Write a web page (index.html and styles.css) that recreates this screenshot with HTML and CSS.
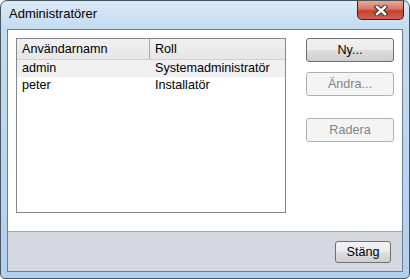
FILE: index.html
```html
<!DOCTYPE html>
<html lang="sv">
<head>
    <meta charset="UTF-8">
    <meta name="viewport" content="width=device-width, initial-scale=1.0">
    <title>Administratörer</title>
    <link rel="stylesheet" href="styles.css">
</head>
<body>

    <div class="window">
        <div class="titlebar">
            <span class="title">Administratörer</span>
            <button class="close" type="button" aria-label="Stäng">
                <svg width="14" height="11" viewBox="0 0 14 11">
                    <path d="M3 2 L11 9 M11 2 L3 9" stroke="#3a3a3a" stroke-width="4.6" stroke-linecap="square"/>
                    <path d="M3 2 L11 9 M11 2 L3 9" stroke="#ffffff" stroke-width="2.4" stroke-linecap="square"/>
                </svg>
            </button>
        </div>

        <div class="client">
            <div class="content">
                <div class="list">
                    <div class="list-head">
                        <span class="col-name">Användarnamn</span>
                        <span class="col-role">Roll</span>
                    </div>
                    <div class="row row-alt">
                        <span class="col-name">admin</span>
                        <span class="col-role">Systemadministratör</span>
                    </div>
                    <div class="row">
                        <span class="col-name">peter</span>
                        <span class="col-role">Installatör</span>
                    </div>
                </div>

                <div class="actions">
                    <button class="btn" type="button">Ny...</button>
                    <button class="btn" type="button" disabled>Ändra...</button>
                    <button class="btn btn-gap" type="button" disabled>Radera</button>
                </div>
            </div>

            <div class="footer">
                <button class="btn btn-close" type="button">Stäng</button>
            </div>
        </div>
    </div>

</body>
</html>
```

FILE: styles.css
```css
/* 基本样式 */
* {
    box-sizing: border-box;
}

body {
    margin: 0;
    background-color: #fff;
    font-family: "Liberation Sans", Arial, sans-serif;
    font-size: 12.6px;
    color: #000;
}

.window {
    width: 410px;
    height: 279px;
    display: flex;
    flex-direction: column;
    padding: 0 6px 6px;
    border: 1px solid #4a5562;
    border-radius: 7px 7px 5px 5px;
    background: linear-gradient(#dbe9f7, #c4dbf1 28px, #b2cfec);
}

/* 标题栏 */
.titlebar {
    height: 28px;
    display: flex;
    align-items: flex-start;
}

.title {
    padding: 6px 0 0 2px;
    line-height: 14px;
    font-size: 13px;
}

.close {
    margin-left: auto;
    margin-right: -1px;
    width: 47px;
    height: 19px;
    padding: 0;
    display: flex;
    align-items: center;
    justify-content: center;
    border: 1px solid #4b1c14;
    border-top: none;
    border-radius: 0 0 5px 5px;
    background: linear-gradient(#e7a999, #d47462 45%, #c4402d 55%, #d4614a);
}

/* 内容区 */
.client {
    flex: 1;
    display: flex;
    flex-direction: column;
    border: 1px solid #6c7e92;
    background-color: #fff;
}

.content {
    flex: 1;
    display: flex;
    gap: 20px;
    padding: 8px 8px 0;
}

.list {
    width: 270px;
    height: 175px;
    border: 1px solid #828790;
}

.list-head,
.row {
    display: flex;
}

.list-head {
    height: 21px;
    line-height: 20px;
    border-bottom: 1px solid #d0d0d0;
    background: linear-gradient(#f0f0f0, #e6e6e6);
}

.list-head .col-name {
    border-right: 1px solid #a8a8a8;
}

.col-name {
    width: 133px;
    padding-left: 5px;
}

.col-role {
    padding-left: 5px;
}

.row {
    height: 17px;
    line-height: 17px;
}

.row-alt {
    background-color: #f0f0f0;
}

/* 按钮 */
.actions {
    display: flex;
    flex-direction: column;
    gap: 10px;
}

.btn {
    width: 88px;
    height: 24px;
    padding: 0;
    border: 1px solid #707070;
    border-radius: 3px;
    background: linear-gradient(#f2f2f2, #ebebeb 48%, #dddddd 52%, #cfcfcf);
    font-family: "Liberation Sans", Arial, sans-serif;
    font-size: 12.6px;
    color: #000;
}

.btn:disabled {
    border-color: #adb2b5;
    background: #f4f4f4;
    color: #838383;
}

.btn-gap {
    margin-top: 12px;
}

.footer {
    height: 40px;
    display: flex;
    justify-content: flex-end;
    padding: 9px 11px 0 0;
    border-top: 1px solid #a3a7af;
    background-color: #d5d8e0;
}

.btn-close {
    width: 56px;
    height: 22px;
}
```
